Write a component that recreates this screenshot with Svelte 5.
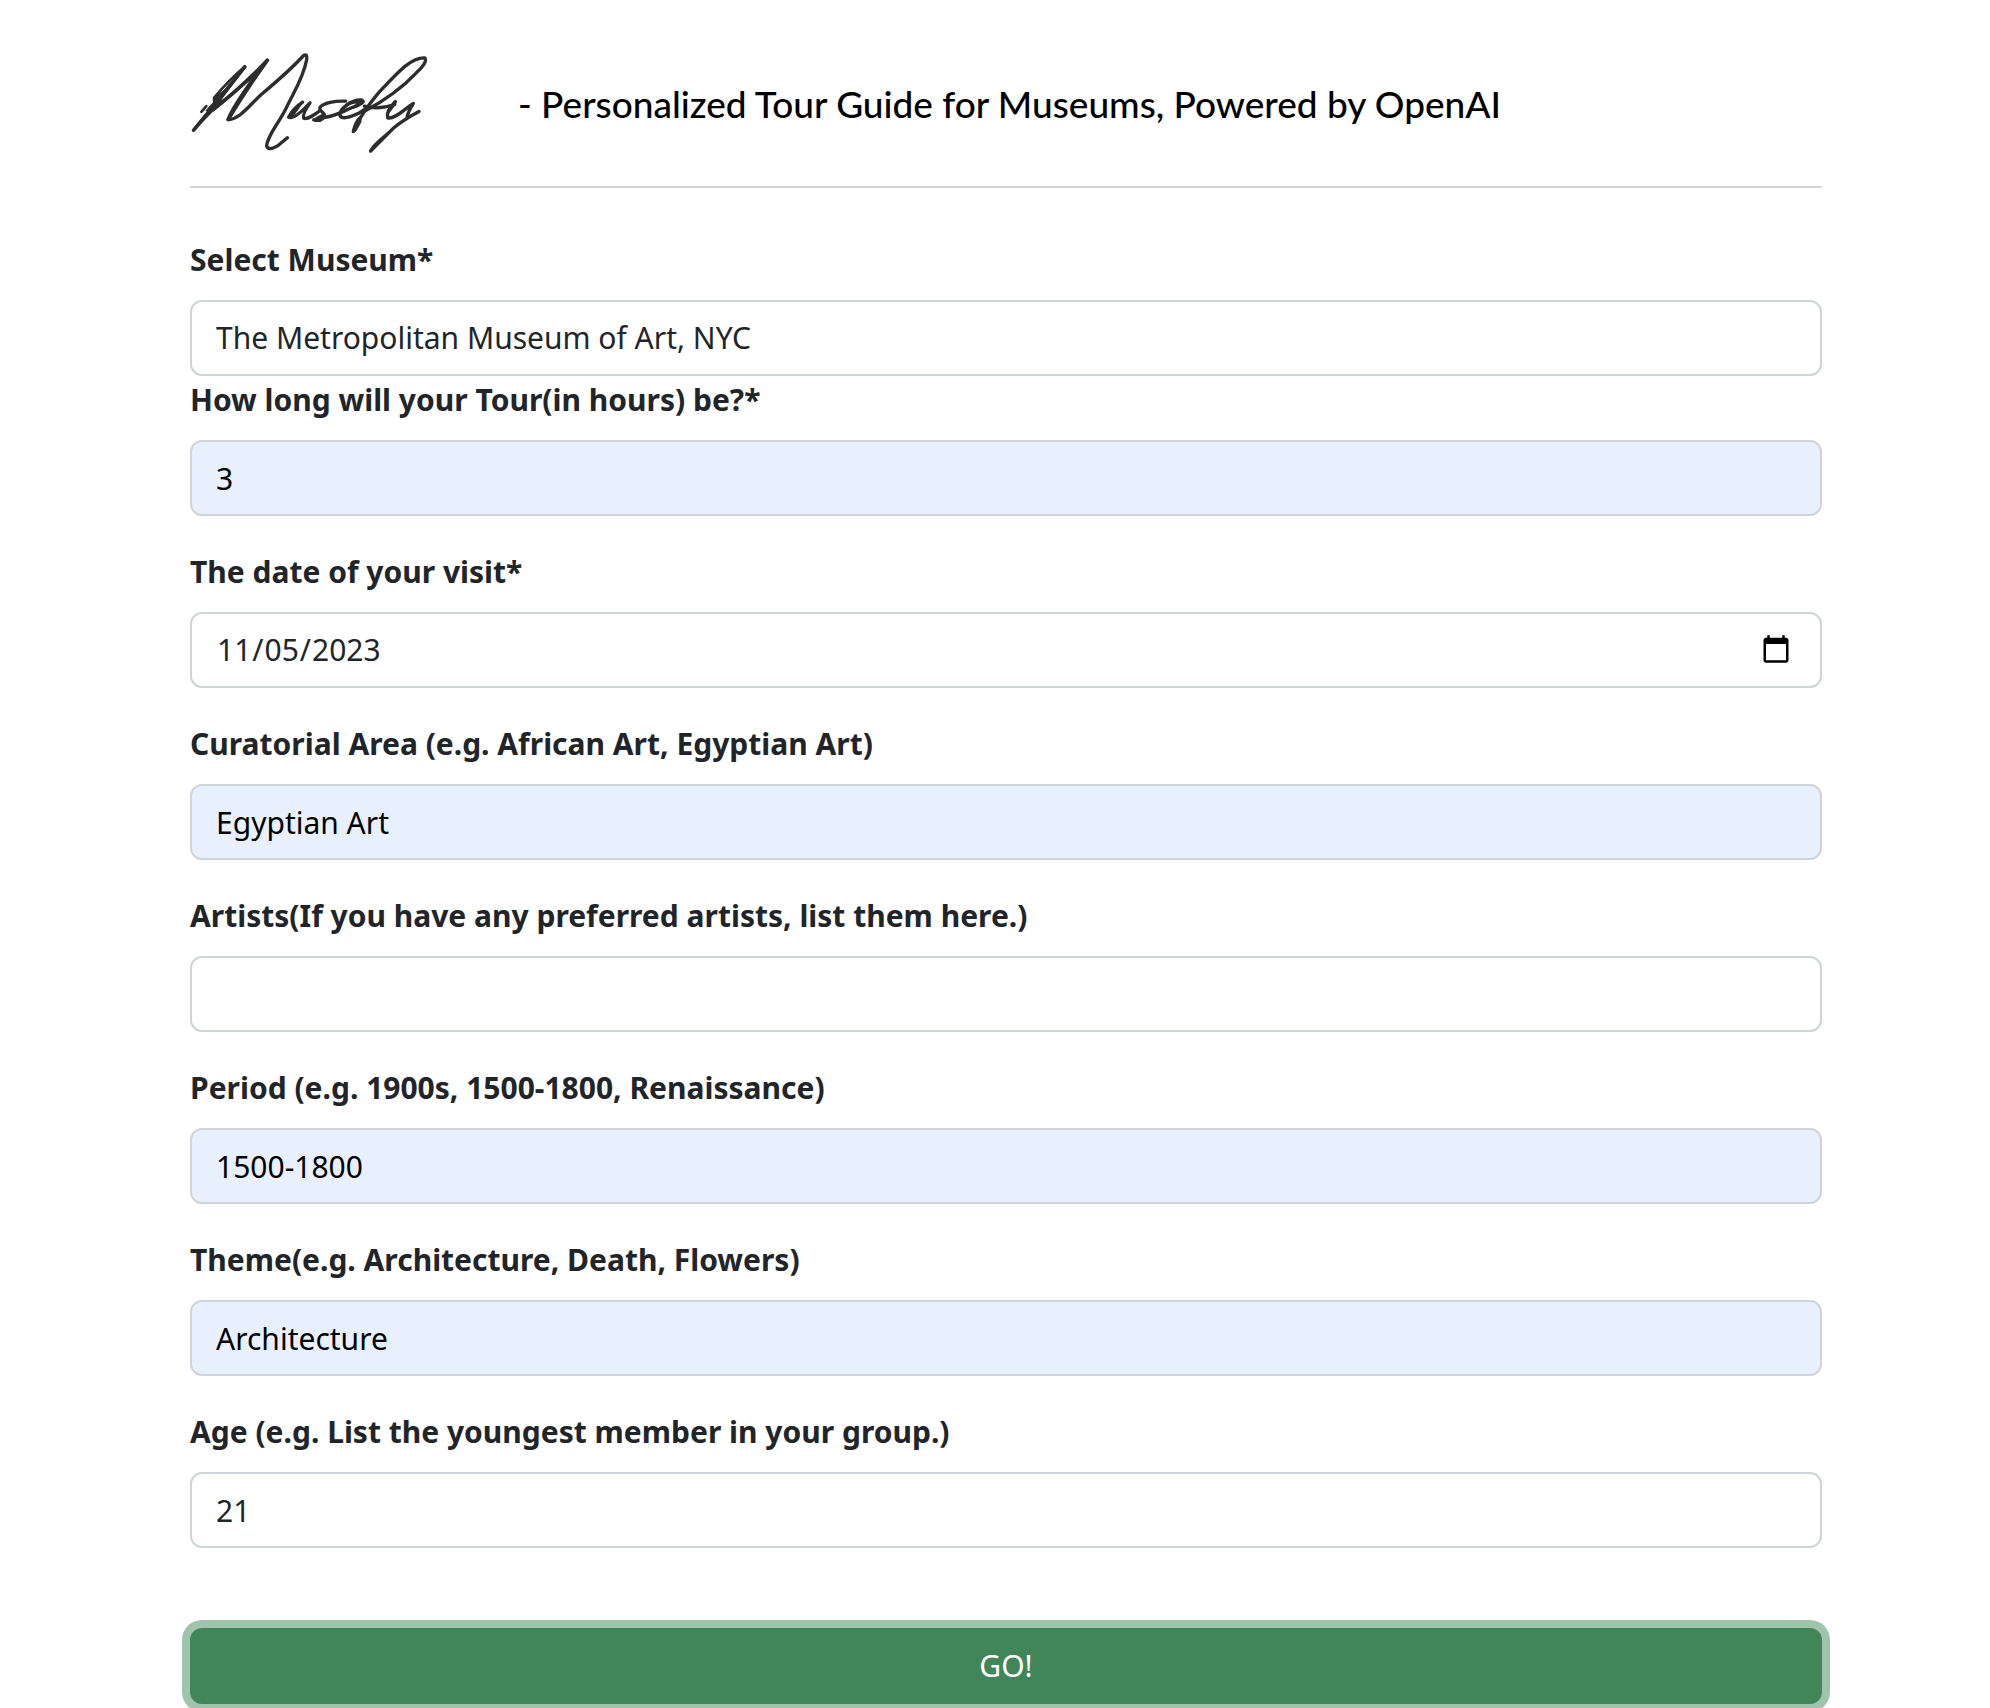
<script>
  let museum = $state('met');
  let fields = $state([
    { id: 'hours', label: 'How long will your Tour(in hours) be?*', type: 'text', value: '3', filled: true },
    { id: 'date', label: 'The date of your visit*', type: 'date', value: '2023-11-05', filled: false },
    { id: 'area', label: 'Curatorial Area (e.g. African Art, Egyptian Art)', type: 'text', value: 'Egyptian Art', filled: true },
    { id: 'artists', label: 'Artists(If you have any preferred artists, list them here.)', type: 'text', value: '', filled: false },
    { id: 'period', label: 'Period (e.g. 1900s, 1500-1800, Renaissance)', type: 'text', value: '1500-1800', filled: true },
    { id: 'theme', label: 'Theme(e.g. Architecture, Death, Flowers)', type: 'text', value: 'Architecture', filled: true },
    { id: 'age', label: 'Age (e.g. List the youngest member in your group.)', type: 'text', value: '21', filled: false }
  ]);
</script>

<div class="page">
  <header>
    <svg class="logo" viewBox="30 30 720 320" role="img" aria-label="Musefy">
      <g fill="none" stroke="#2d2d2d" stroke-linecap="round" stroke-linejoin="round">
        <!-- M -->
        <path stroke-width="8" d="M64 215L79 198M102 173Q150 116 195 79" />
        <path stroke-width="11" d="M41 270Q115 180 194 80M262 60Q195 132 99 209M262 60Q203 142 145 237" />
        <path stroke-width="10" d="M145 239C180 235 202 202 243 164C296 119 337 83 371 46Q382 39 380 58C371 113 336 165 318 205C295 251 261 288 260 317Q264 335 297 314L322 293" />
        <!-- use -->
        <path stroke-width="10" d="M368 186Q340 204 326 231Q340 241 390 188Q366 223 371 234C382 239 409 220 421 210M497 183C466 181 429 189 420 202C415 214 438 216 432 230Q424 245 401 239M432 232C468 229 499 207 528 198Q561 184 543 179C514 178 477 206 480 226C487 242 530 226 557 206" />
        <!-- fy -->
        <path stroke-width="10" d="M520 274Q526 246 543 230Q566 193 600 153C650 101 691 52 733 53C744 59 729 80 709 98C674 135 621 177 557 211M553 198Q594 210 644 193M646 184Q617 213 623 233C642 239 673 207 700 190Q684 214 681 233M717 214Q668 240 638 266Q603 300 572 332" />
      </g>
      <g fill="#2d2d2d">
        <path d="M37 273L84 215L76 212L99 186L98 175L134 147L195 76L199 81L123 181L178 143L259 57Q269 57 259 73L177 184L149 240L139 242Q140 220 209 122L107 206L42 274Z" />
        <path d="M322 232L340 204L367 184L370 188L345 222L334 237ZM399 239Q407 229 436 218Q440 231 424 244Q407 249 399 239Z" />
        <path d="M478 222Q489 193 525 179Q552 174 554 184Q540 203 502 210L529 190Q509 190 488 212ZM515 274L525 247L548 219L544 246L531 270Q521 283 515 274Z" />
        <path d="M567 333Q571 315 625 273L649 261L620 291L577 334Q570 342 567 333ZM619 226L638 193L648 183L650 190L628 219Z" />
      </g>
    </svg>
    <h1>- Personalized Tour Guide for Museums, Powered by OpenAI</h1>
  </header>

  <form onsubmit={(e) => e.preventDefault()}>
    <div class="field tight">
      <label for="museum">Select Museum*</label>
      <select id="museum" bind:value={museum}>
        <option value="met">The Metropolitan Museum of Art, NYC</option>
      </select>
    </div>
    {#each fields as field (field.id)}
      <div class="field">
        <label for={field.id}>{field.label}</label>
        <input id={field.id} type={field.type} class:filled={field.filled} bind:value={field.value} />
      </div>
    {/each}
    <button type="submit">GO!</button>
  </form>
</div>

<style>
  :global(body) {
    margin: 0;
    background: #fff;
  }
  .page {
    box-sizing: border-box;
    padding: 50px 168px 0 190px;
    overflow: hidden;
    color: #212529;
    font-family: 'Trebuchet MS', 'Noto Sans', sans-serif;
    font-size: 30px;
    font-weight: 450;
    line-height: 48px;
  }
  header {
    display: flex;
    align-items: center;
    gap: 88px;
    padding-bottom: 29px;
    border-bottom: 2px solid #d3d3d3;
  }
  .logo {
    flex: none;
    width: 240px;
    height: 107px;
  }
  h1 {
    margin: 0;
    color: #000;
    font-family: 'Gill Sans', Lato, sans-serif;
    font-size: 37px;
    font-weight: 500;
    line-height: 48px;
  }
  form {
    padding-top: 48px;
  }
  .field {
    margin-bottom: 32px;
  }
  .tight {
    margin-bottom: 0;
  }
  label {
    display: block;
    margin-bottom: 16px;
    font-weight: 700;
  }
  input,
  select {
    display: block;
    box-sizing: border-box;
    width: 100%;
    height: 76px;
    margin: 0;
    padding: 12px 24px;
    border: 2px solid #ced4da;
    border-radius: 12px;
    outline: 0;
    appearance: none;
    background: #fff;
    color: #212529;
    font: inherit;
  }
  .filled {
    background: #e8f0fe;
    color: #000;
  }
  input::-webkit-calendar-picker-indicator {
    width: 32px;
    height: 32px;
    margin-right: 4px;
    padding: 0;
  }
  button {
    display: block;
    width: 100%;
    height: 76px;
    margin: 80px 0 8px;
    padding: 12px 24px;
    border: 0;
    border-radius: 12px;
    background: #418658;
    box-shadow: 0 0 0 8px #a0c3ac;
    color: #fff;
    font: inherit;
  }
</style>
